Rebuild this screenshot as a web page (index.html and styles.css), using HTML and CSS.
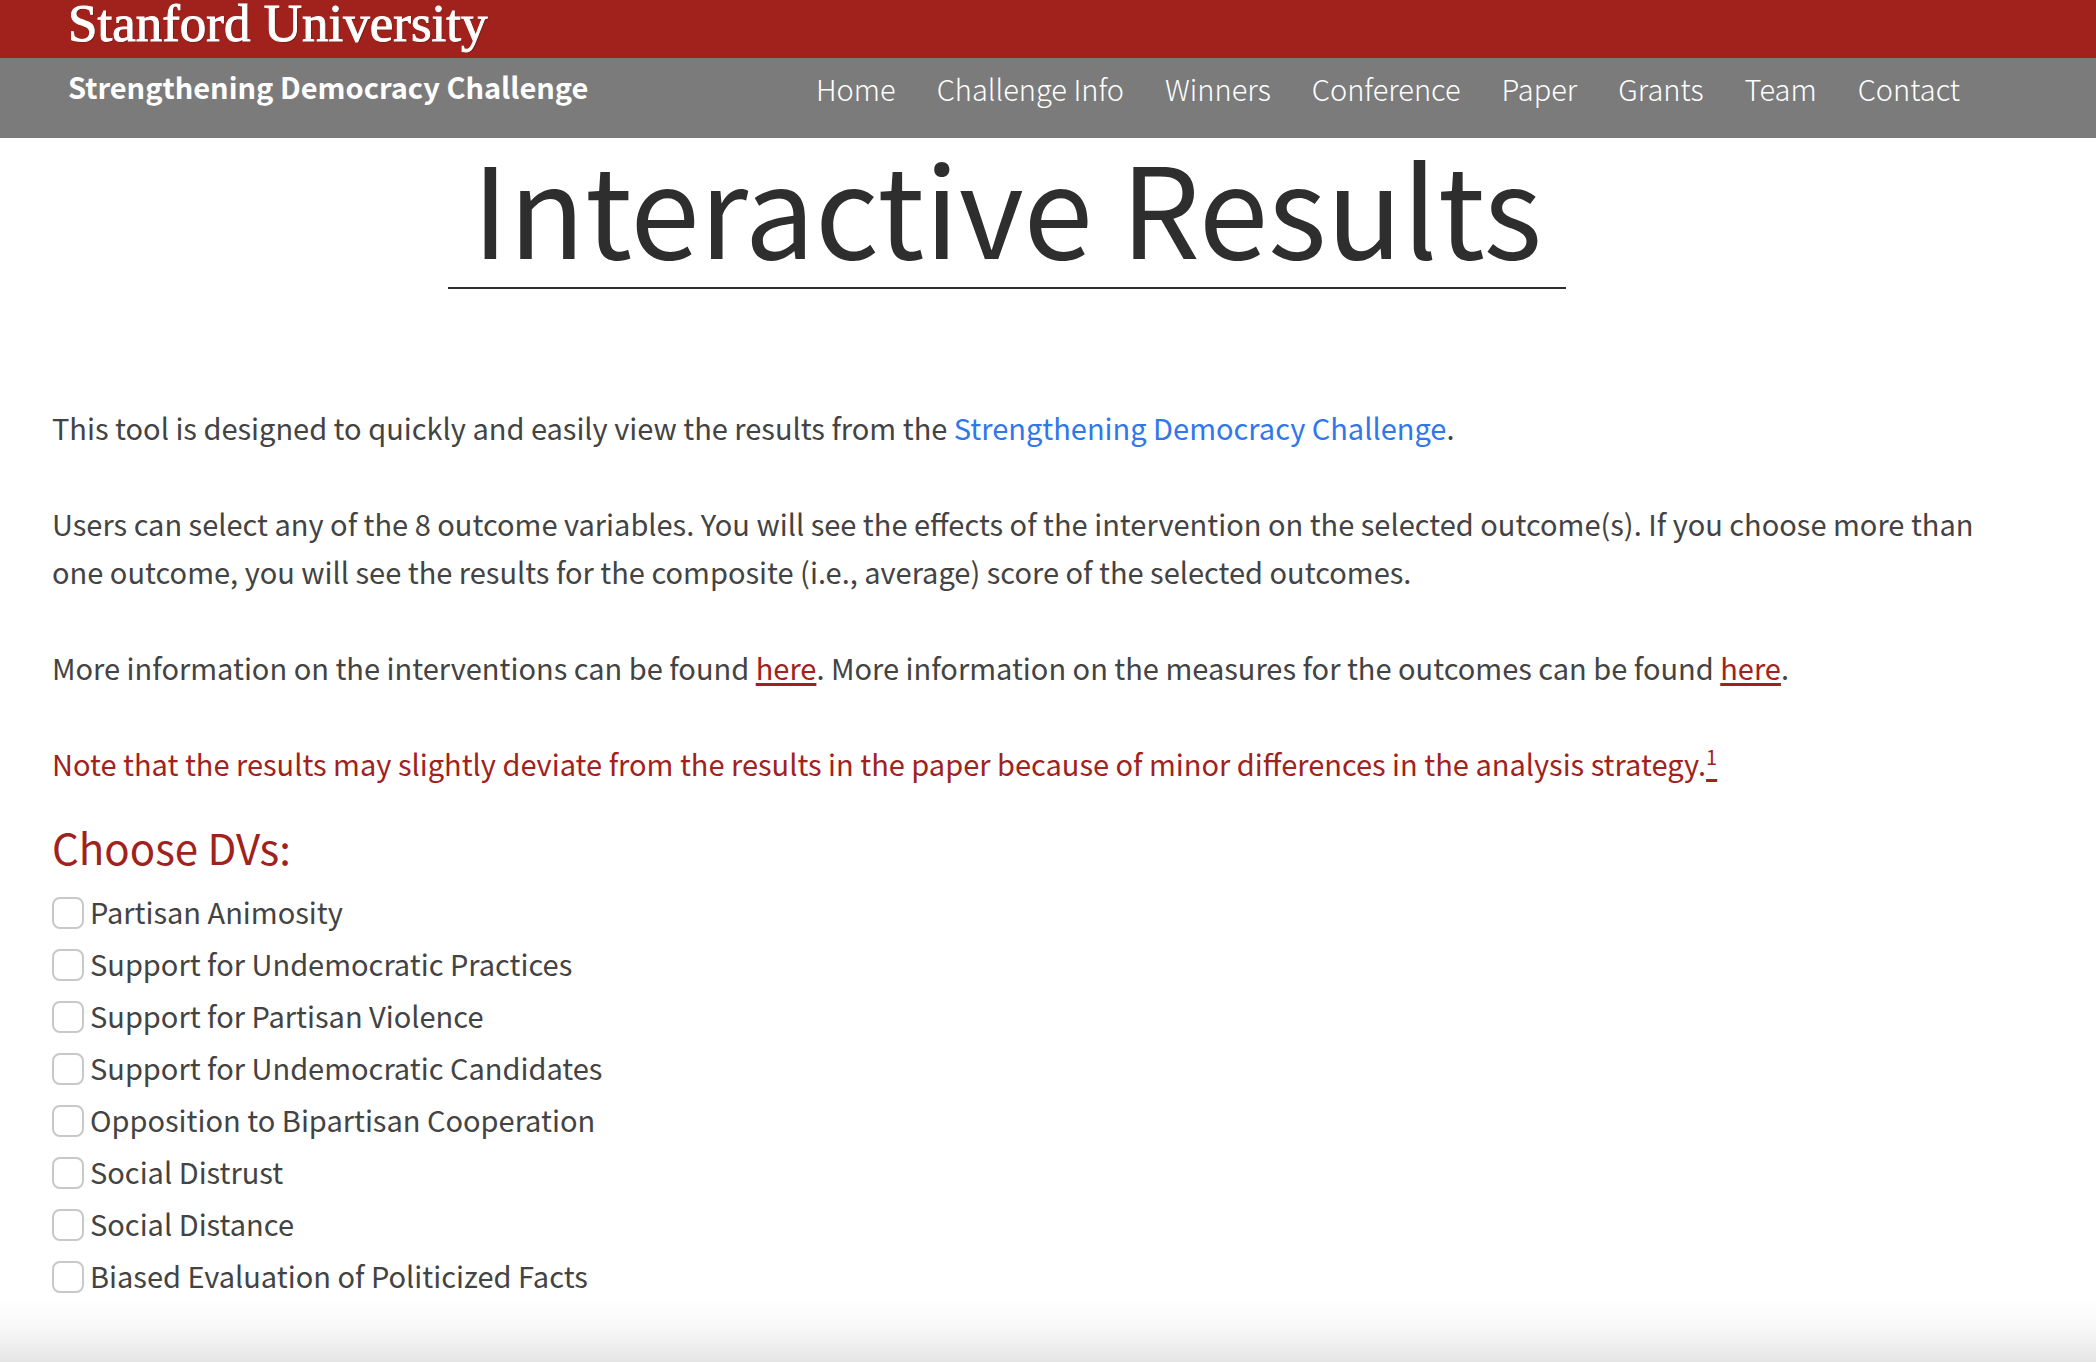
FILE: index.html
```html
<!DOCTYPE html>
<html lang="en">
<head>
<meta charset="utf-8">
<meta name="viewport" content="width=device-width, initial-scale=1">
<title>Interactive Results</title>
<link rel="stylesheet" href="styles.css">
</head>
<body>
<header>
  <div class="brand-bar"><a class="wordmark" href="#">Stanford University</a></div>
  <div class="nav-bar">
    <a class="site-name" href="#">Strengthening Democracy Challenge</a>
    <nav class="menu">
      <a href="#">Home</a>
      <a href="#">Challenge Info</a>
      <a href="#">Winners</a>
      <a href="#">Conference</a>
      <a href="#">Paper</a>
      <a href="#">Grants</a>
      <a href="#">Team</a>
      <a href="#">Contact</a>
    </nav>
  </div>
</header>
<main class="content">
  <div class="title-row">
    <h1 class="title">Interactive Results</h1>
  </div>
  <div class="intro">
    <p>This tool is designed to quickly and easily view the results from the <a class="challenge-link" href="#">Strengthening Democracy Challenge</a>.</p>
    <p>Users can select any of the 8 outcome variables. You will see the effects of the intervention on the selected outcome(s). If you choose more than one outcome, you will see the results for the composite (i.e., average) score of the selected outcomes.</p>
    <p>More information on the interventions can be found <a class="text-link" href="#">here</a>. More information on the measures for the outcomes can be found <a class="text-link" href="#">here</a>.</p>
    <p class="note">Note that the results may slightly deviate from the results in the paper because of minor differences in the analysis strategy.<a class="text-link" href="#"><sup>1</sup></a></p>
  </div>
  <form>
    <fieldset class="choices">
      <legend>Choose DVs:</legend>
      <label><input type="checkbox">Partisan Animosity</label>
      <label><input type="checkbox">Support for Undemocratic Practices</label>
      <label><input type="checkbox">Support for Partisan Violence</label>
      <label><input type="checkbox">Support for Undemocratic Candidates</label>
      <label><input type="checkbox">Opposition to Bipartisan Cooperation</label>
      <label><input type="checkbox">Social Distrust</label>
      <label><input type="checkbox">Social Distance</label>
      <label><input type="checkbox">Biased Evaluation of Politicized Facts</label>
    </fieldset>
  </form>
</main>
<div class="fade"></div>
</body>
</html>
```
FILE: styles.css
```css
* { box-sizing: border-box; }

body {
  margin: 0;
  min-height: 100vh;
  display: flex;
  flex-direction: column;
  background: #fff;
  color: #434343;
  font-family: "Noto Sans CJK SC", "Noto Sans", sans-serif;
  font-size: 29px;
  line-height: 48px;
}

a { color: inherit; text-decoration: none; }

.brand-bar {
  height: 58px;
  padding-left: 68px;
  background: #a1221c;
  color: #fff;
}

.wordmark {
  display: block;
  font-family: "Liberation Serif", serif;
  font-size: 53px;
  line-height: 47px;
  -webkit-text-stroke: 1px #fff;
  text-shadow: 1px 1px 1px rgba(0, 0, 0, 0.4);
}

.nav-bar {
  display: flex;
  justify-content: space-between;
  height: 80px;
  padding: 4px 136px 0 68px;
  background: #7b7b7b;
  color: #fff;
}

.site-name { font-weight: 700; }

.menu {
  display: flex;
  gap: 41px;
  padding-top: 2px;
  font-weight: 300;
}

.content { padding: 0 120px 0 52px; }

.title-row {
  display: flex;
  justify-content: center;
  padding-right: 14px;
}

.title {
  margin: 0;
  padding: 0 24px 16px;
  border-bottom: 2px solid #2e2e2e;
  color: #2e2e2e;
  font-size: 125px;
  font-weight: 400;
  line-height: 133px;
}

.intro { padding-top: 114px; }
.intro p { margin: 0 0 48px; }
.intro .note { margin-bottom: 34px; color: #a1221c; }

.challenge-link { color: #2f77eb; }

.text-link {
  color: #a1221c;
  text-decoration: underline;
  text-decoration-thickness: 3px;
  text-underline-offset: 3px;
}

sup { font-size: 20px; line-height: 0; }

.choices {
  display: grid;
  gap: 4px;
  margin: 0;
  padding: 0;
  border: 0;
}

.choices legend {
  padding: 0 0 14px;
  color: #a1221c;
  font-size: 42px;
  line-height: 52px;
}

.choices label {
  display: flex;
  align-items: center;
  gap: 6px;
}

.choices input {
  appearance: none;
  width: 32px;
  height: 32px;
  margin: 4px 0 0;
  border: 2px solid #c8c8c8;
  border-radius: 8px;
  background: #fff;
}

.fade {
  flex: 1;
  background: linear-gradient(#fff, #f7f7f7 50%, #e5e5e5);
}
```
